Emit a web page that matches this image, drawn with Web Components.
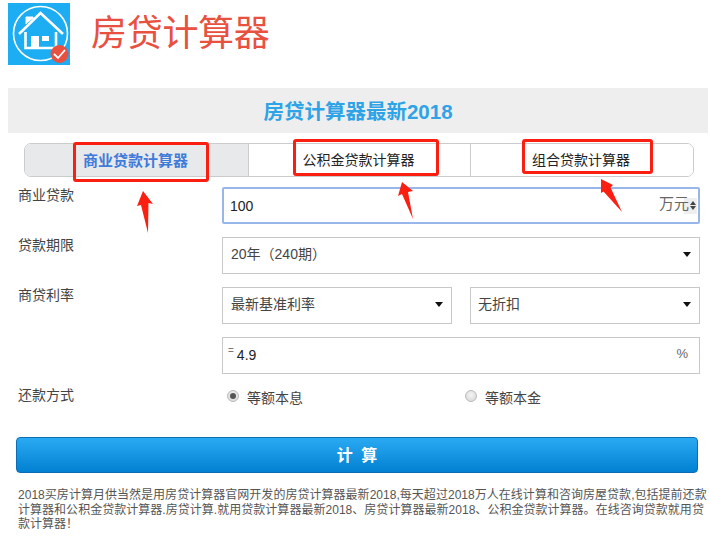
<!DOCTYPE html>
<html lang="zh">
<head>
<meta charset="utf-8">
<title>房贷计算器</title>
<style>
  html, body { margin: 0; background: #fff; }
  body { font-family: "Liberation Sans", "Noto Sans CJK SC", sans-serif; font-size: 14px; color: #444; }
</style>
</head>
<body>
<calc-page>
  <site-header>房贷计算器</site-header>
  <calc-band>房贷计算器最新2018</calc-band>
  <calc-tabs>
    <calc-tab active wide>商业贷款计算器</calc-tab>
    <calc-tab>公积金贷款计算器</calc-tab>
    <calc-tab>组合贷款计算器</calc-tab>
  </calc-tabs>
  <calc-row label="商业贷款">
    <calc-field focused unit="万元" spinner>100</calc-field>
  </calc-row>
  <calc-row label="贷款期限">
    <calc-field select>20年（240期）</calc-field>
  </calc-row>
  <calc-row label="商贷利率">
    <calc-field select>最新基准利率</calc-field>
    <calc-field select>无折扣</calc-field>
  </calc-row>
  <calc-row>
    <calc-field unit="%" prefix="=">4.9</calc-field>
  </calc-row>
  <calc-row label="还款方式" plain>
    <calc-radio checked>等额本息</calc-radio>
    <calc-radio>等额本金</calc-radio>
  </calc-row>
  <calc-button>计 算</calc-button>
  <calc-note>2018买房计算月供当然是用房贷计算器官网开发的房贷计算器最新2018,每天超过2018万人在线计算和咨询房屋贷款,包括提前还款计算器和公积金贷款计算器.房贷计算.就用贷款计算器最新2018、房贷计算器最新2018、公积金贷款计算器。在线咨询贷款就用贷款计算器！</calc-note>
  <red-marks></red-marks>
</calc-page>

<script>
/** small helper, every element just sets its own shadow html */
class Base extends HTMLElement {
    constructor() {
        super();
        this.attachShadow({mode: 'open'});
    }
    connectedCallback() {
        this.shadowRoot.innerHTML = this.render();
    }
}

class CalcPage extends Base {
    render() {
        return `<style>:host { display: block; position: relative; width: 709px; height: 536px; overflow: hidden; }</style><slot></slot>`;
    }
}

class SiteHeader extends Base {
    render() {
        return `<style>
            :host { display: flex; align-items: center; gap: 21px; height: 62px; padding: 3px 0 23px 8px; }
            svg { display: block; }
            h1 { margin: 0; font-size: 36px; font-weight: 400; color: #e8503f; line-height: 62px; letter-spacing: -0.3px; }
        </style>
        <svg width="62" height="62" viewBox="0 0 62 62">
            <rect width="62" height="62" fill="#1cadf2"/>
            <circle cx="32.500" cy="30.500" r="27" fill="none" stroke="#fff" stroke-width="1.600"/>
            <path d="M11 31 32.500 10 55 31" fill="none" stroke="#fff" stroke-width="2.600"/>
            <path d="M18 21V14h7v1.500" fill="#fff" stroke="#fff"/>
            <path d="M17.500 29V45H48V29" fill="none" stroke="#fff" stroke-width="2.600"/>
            <rect x="23" y="33" width="8" height="12" fill="#fff"/>
            <rect x="34" y="33" width="7" height="5" fill="#fff"/>
            <circle cx="51.500" cy="51" r="9" fill="#e9503f"/>
            <path d="M46 51l4 4 7-8" fill="none" stroke="#fff" stroke-width="1.800"/>
        </svg>
        <h1><slot></slot></h1>`;
    }
}

class CalcBand extends Base {
    render() {
        return `<style>
            :host { display: block; margin: 0 1px 0 8px; height: 45px; line-height: 47px; background: #eee; text-align: center;
                    font-size: 20.500px; font-weight: 700; color: #2ea3e6; }
        </style><slot></slot>`;
    }
}

class CalcTabs extends Base {
    render() {
        return `<style>
            :host { display: grid; grid-template-columns: 224px 222px 1fr; margin: 10px 15px 10px 24px; height: 32px;
                    border: 1px solid #ccc; border-radius: 7px; overflow: hidden; width: 668px; }
        </style><slot></slot>`;
    }
}

class CalcTab extends Base {
    render() {
        const active = this.hasAttribute('active');
        return `<style>
            :host { display: flex; align-items: center; justify-content: center; font-size: ${active ? 15 : 14}px; color: ${active ? '#3f7bd9' : '#222'};
                    font-weight: ${active ? 700 : 400}; background: ${active ? '#e8e9eb' : '#fff'}; border-right: 1px solid #ccc;
                    padding: 0 2px 2px 0; }
            :host(:last-child) { border-right: 0; }
        </style><slot></slot>`;
    }
}

class CalcRow extends Base {
    render() {
        const label = this.getAttribute('label') || '';
        const plain = this.hasAttribute('plain');
        return `<style>
            :host { display: grid; grid-template-columns: 204px 478px; margin: 0 0 ${plain ? 26 : 13}px 18px; }
            .label { line-height: 18px; color: #444; margin-top: -1px; }
            .fields { display: flex; gap: 18px; ${plain ? 'height: 24px; padding-left: 5px; gap: 0;' : ''} }
        </style>
        <div class="label">${label}</div>
        <div class="fields"><slot></slot></div>`;
    }
}

class CalcField extends Base {
    render() {
        const focused = this.hasAttribute('focused');
        const select = this.hasAttribute('select');
        const unit = this.getAttribute('unit');
        const prefix = this.getAttribute('prefix');
        const spinner = this.hasAttribute('spinner');
        return `<style>
            :host { flex: 1 1 0; display: flex; align-items: center; position: relative; box-sizing: border-box; height: 37px;
                    padding: 0 8px ${select ? 4 : prefix ? 2 : 0}px 8px;
                    background: #fff; border: 1px solid #c8c8c8; color: ${select ? '#444' : '#222'}; }
            :host([focused]) { border: 2px solid #97b7ea; border-radius: 2px; padding-left: 6px; }
            .text { flex: 1; line-height: 18px; }
            :host([select]:nth-child(2)) .text { margin-left: -1px; }
            .prefix { font-size: 10px; color: #777; margin: 8px 3px 0 -3px; align-self: flex-start; line-height: 10px; }
            .unit { color: #666; font-size: ${unit === '%' ? 13 : 15}px; margin-right: ${spinner ? 0 : 3}px; margin-top: ${spinner ? -7 : -3}px; position: relative; z-index: 1; }
            .caret { width: 0; height: 0; border: 4px solid transparent; border-top: 5px solid #111; border-bottom: 0; margin-top: 1px; }
            .spin { display: flex; flex-direction: column; gap: 1px; justify-content: center; align-items: center; width: 13px; height: 16px;
                    margin: 0 -7px 0 -5px; padding-left: 4px; box-sizing: content-box; width: 9px; background: #eee; position: relative; }
            .spin i { width: 0; height: 0; border: 3.500px solid transparent; }
            .up { border-bottom: 4px solid #444 !important; border-top: 0 !important; }
            .down { border-top: 4px solid #444 !important; border-bottom: 0 !important; }
        </style>
        ${prefix ? `<span class="prefix">${prefix}</span>` : ''}
        <span class="text"><slot></slot></span>
        ${unit ? `<span class="unit">${unit}</span>` : ''}
        ${spinner ? '<span class="spin"><i class="up"></i><i class="down"></i></span>' : ''}
        ${select ? '<i class="caret"></i>' : ''}`;
    }
}

class CalcRadio extends Base {
    render() {
        const checked = this.hasAttribute('checked');
        return `<style>
            :host { flex: none; display: flex; align-items: center; gap: 8px; width: 238px; height: 20px; color: #444; }
            .dot { box-sizing: border-box; width: 12px; height: 12px; border-radius: 50%; border: 1px solid #bbb;
                   background: radial-gradient(circle at 50% 40%, #f4f4f4, #d4d4d4); display: flex; align-items: center; justify-content: center; margin-top: -2px; }
            .dot i { width: 6px; height: 6px; border-radius: 50%; background: #555; }
        </style>
        <span class="dot">${checked ? '<i></i>' : ''}</span><span><slot></slot></span>`;
    }
}

class CalcButton extends Base {
    render() {
        return `<style>
            :host { display: block; box-sizing: border-box; width: 682px; height: 36px; line-height: 36px; margin: 0 0 15px 16px; text-align: center;
                    background: linear-gradient(#2aaaf2, #0280d2); border: 1px solid #0a6db5; border-radius: 4px;
                    color: #fff; font-size: 16px; font-weight: 700; word-spacing: 4px; }
        </style><slot></slot>`;
    }
}

class CalcNote extends Base {
    render() {
        return `<style>
            :host { display: block; width: 692px; margin-left: 18px; font-size: 12px; line-height: 14.500px; color: #555; word-break: break-all; letter-spacing: 0.03px; }
        </style><slot></slot>`;
    }
}

/** the hand drawn red boxes and arrows lying on top of the form */
class RedMarks extends Base {
    render() {
        return `<style>
            :host { position: absolute; inset: 0; pointer-events: none; display: block; }
            div { position: absolute; box-sizing: border-box; border: 3px solid #fb1f12; border-radius: 3px; }
            svg { position: absolute; left: 0; top: 0; }
        </style>
        <div style="left:73px;top:142px;width:136px;height:40px"></div>
        <div style="left:293px;top:139px;width:146px;height:37px"></div>
        <div style="left:522px;top:139px;width:131px;height:35px"></div>
        <svg width="709" height="536" fill="#fb1f12">
            <polygon points="143,191 153,204 148.500,203 148,233 141,205 137,206"/>
            <polygon points="402,182 413,191 408,192 413,219 402,194 398,196"/>
            <polygon points="601,179 613,185 610.500,187.500 622,212 603.500,191.500 601,193"/>
        </svg>`;
    }
}

customElements.define('calc-page', CalcPage);
customElements.define('site-header', SiteHeader);
customElements.define('calc-band', CalcBand);
customElements.define('calc-tabs', CalcTabs);
customElements.define('calc-tab', CalcTab);
customElements.define('calc-row', CalcRow);
customElements.define('calc-field', CalcField);
customElements.define('calc-radio', CalcRadio);
customElements.define('calc-button', CalcButton);
customElements.define('calc-note', CalcNote);
customElements.define('red-marks', RedMarks);
</script>
</body>
</html>
